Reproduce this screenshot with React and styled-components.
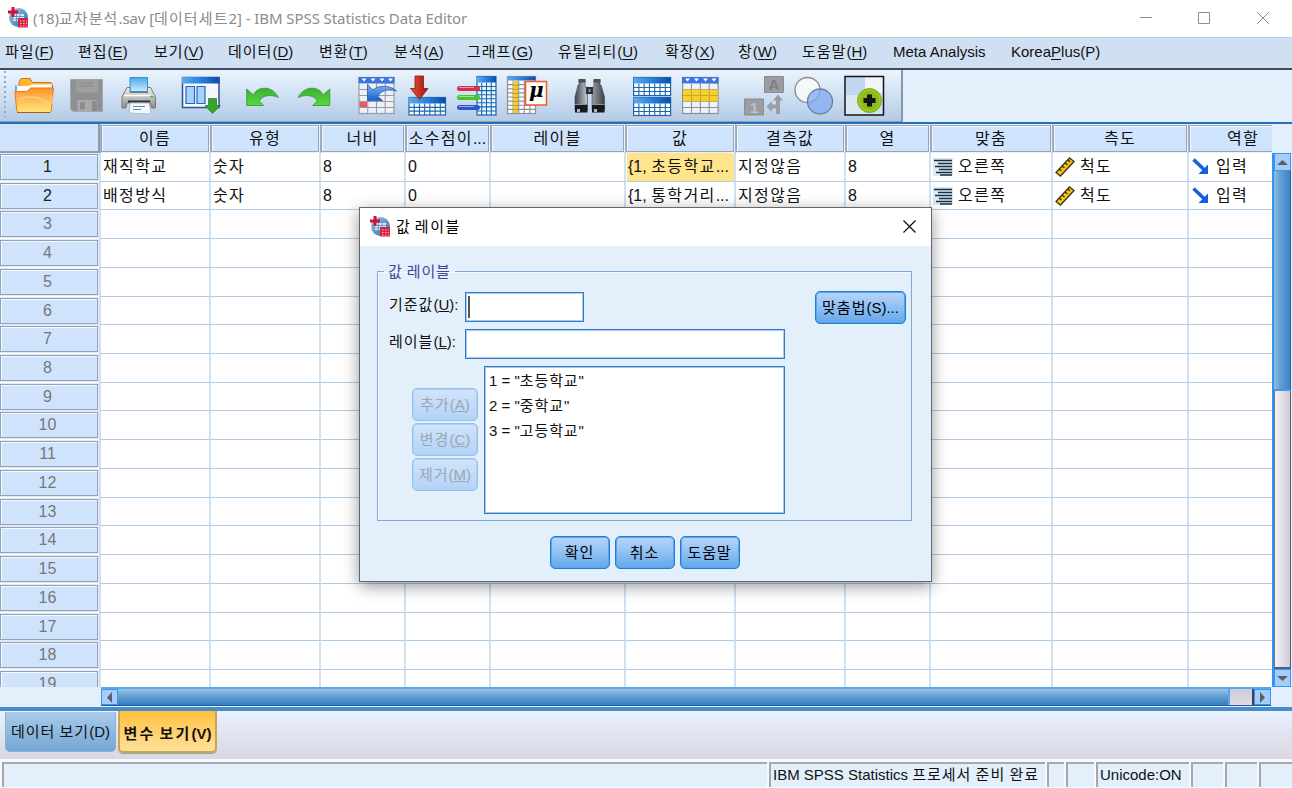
import React from 'react';
import styled, { createGlobalStyle, css } from 'styled-components';

const GlobalStyle = createGlobalStyle`
  * {
    box-sizing: border-box;
  }

  body {
    margin: 0;
    overflow: hidden;
    background: #fff;
    font-family: 'Liberation Sans', 'Noto Sans CJK KR', sans-serif;
    font-size: 15px;
    color: #111;
  }
`;

const Hangul = styled.span`
  letter-spacing: ${p => p.$space}px;
`;

// "_x" in a label marks the mnemonic letter
function Label({ text, space = 1 }) {
  return text
    .split(/([가-힣]+|_.)/)
    .filter(Boolean)
    .map((part, i) => {
      if (part[0] === '_') return <u key={i}>{part[1]}</u>;
      if (/[가-힣]/.test(part)) {
        return (
          <Hangul key={i} $space={space}>
            {part}
          </Hangul>
        );
      }
      return <React.Fragment key={i}>{part}</React.Fragment>;
    });
}

/* window */

const Window = styled.div`
  position: relative;
  width: 1292px;
  height: 788px;
  display: flex;
  flex-direction: column;
  overflow: hidden;
  white-space: pre;
  background: #e3effb;
`;

const TitleBar = styled.div`
  flex: none;
  height: 37px;
  display: flex;
  align-items: center;
  padding: 0 22px 2px 8px;
  background: #fff;
`;

const Title = styled.div`
  flex: 1;
  margin-left: 5px;
  line-height: 24px;
  font-family: 'Noto Sans', 'Noto Sans CJK KR', sans-serif;
  font-size: 15px;
  letter-spacing: -0.08px;
  color: #8c8c8c;
`;

const Controls = styled.svg`
  display: block;
  width: 132px;
  height: 14px;
  margin-top: 1px;
`;

const MenuBar = styled.div`
  flex: none;
  height: 33px;
  display: flex;
  align-items: center;
  padding: 0 0 2px 5px;
  line-height: 24px;
  background: #cfe0f2;
  border-top: 1px solid #b9cfe4;
  border-bottom: 2px solid #434a56;

  u {
    text-underline-offset: 2px;
  }
`;

const MenuItem = styled.div`
  width: ${p => p.$width}px;
`;

const ToolArea = styled.div`
  flex: none;
  height: 54px;
  display: flex;
  background: #e3effb;
  border-bottom: 2px solid #2371bd;
`;

const ToolBar = styled.div`
  width: 903px;
  display: flex;
  padding: 5px 0 0 4px;
  background: linear-gradient(#ecf4fd, #cfe0f3 50%, #b3cbe6);
  border-right: 2px solid #8b97a5;
  border-bottom: 1px solid #8d9aa9;
`;

const Grip = styled.div`
  width: 2px;
  height: 46px;
  margin-right: 8px;
  margin-top: -4px;
  background: repeating-linear-gradient(#9aa6b5 0 2px, transparent 2px 5px);
`;

const ToolIcon = styled.svg`
  flex: none;
  display: block;
  height: 42px;
  width: ${p => p.$width}px;
  margin-left: ${p => p.$gap}px;
`;

/* grid */

const GridArea = styled.div`
  flex: none;
  height: 587px;
  display: grid;
  grid-template-columns: 1272px 20px;
  grid-template-rows: 29px 534px 20px;
  border-bottom: 4px solid #4a8cca;
  background: #e3effb;
`;

const HeaderRow = styled.div`
  display: flex;
  overflow: hidden;
  background: #e9f2fc;
`;

const Corner = styled.div`
  flex: none;
  width: 100px;
  background: #cfe3fc;
  border-right: 2px solid #8f9db0;
  border-bottom: 2px solid #8f9db0;
`;

const HeaderCell = styled.div`
  flex: none;
  width: ${p => p.$width}px;
  padding: 1px 1px 0 1px;
  background: linear-gradient(90deg, #a5b1c2 1px, transparent 1px);
`;

const HeaderFace = styled.div`
  height: 27px;
  line-height: 25px;
  text-align: center;
  font-size: 16px;
  overflow: hidden;
  background: #cfe3fc;
  border: 1px solid #98a5b8;
  box-shadow: inset 1px 1px #f4f9ff;
`;

const Rows = styled.div`
  overflow: hidden;
  background: #fff;
`;

const Row = styled.div`
  display: flex;
  height: 28.72px;
`;

const RowHead = styled.div`
  flex: none;
  width: 98px;
  height: 26px;
  margin: 1px 1px 0 0;
  line-height: 24px;
  padding-right: 3px;
  text-align: center;
  font-size: 16px;
  color: ${p => (p.$used ? '#222' : '#777')};
  background: #cfe3fc;
  border: 1px solid #95a2b5;
  box-shadow: inset 1px 1px #f4f9ff;
  outline: 1px solid #dfeaf6;
`;

const Cell = styled.div`
  flex: none;
  width: ${p => p.$width}px;
  display: flex;
  align-items: center;
  padding: 0 0 0 2px;
  line-height: 24px;
  overflow: hidden;
  font-size: 16px;
  border-right: 2px solid #d0e1f1;
  border-bottom: 1px solid #aecbe7;

  &:nth-child(2) {
    width: ${p => p.$width + 2}px;
    border-left: 2px solid #d0e1f1;
  }

  ${p =>
    p.$active &&
    css`
      background: #ffe48b;
      border-left: 1px solid #fff;
      padding-left: 1px;
    `}
`;

const CellIcon = styled.svg`
  flex: none;
  display: block;
  width: 20px;
  height: 20px;
  margin-right: 5px;
`;

const VScroll = styled.div`
  width: 19px;
  display: flex;
  flex-direction: column;
  border-left: 2px solid #3494ee;
  background: #e7e6f0;
`;

const HScroll = styled.div`
  display: flex;
  height: 19px;
  margin-left: 101px;
  margin-right: 1px;
  border-top: 2px solid #57a9ee;
  border-bottom: 1px solid #1c5d9e;
  background: #d6d3e0;
`;

const ScrollButton = styled.div`
  flex: none;
  width: 17px;
  height: ${p => (p.$vertical ? 18 : 16)}px;
  display: flex;
  align-items: center;
  justify-content: center;
  background: #a5cdfc;
  border: 1px solid #3d95ea;
`;

const VThumb = styled.div`
  height: 220px;
  background: linear-gradient(90deg, #8dbbe0, #61a0d6 40%, #3a83c7);
  border-right: 1px solid #1c66ad;
  border-bottom: 2px solid #479ae6;
`;

const VTrack = styled.div`
  flex: 1;
  background: linear-gradient(90deg, #f3f2f8, #cfccd9);
  border-left: 1px solid #777;
  border-right: 1px solid #555a75;
  border-bottom: 2px solid #52617c;
`;

const HThumb = styled.div`
  width: 1110px;
  background: linear-gradient(#9cc3e4, #5e9dd3 50%, #347dc2);
`;

const HTrack = styled.div`
  flex: 1;
  background: linear-gradient(#cfcbd8, #dedbe6);
  border-left: 2px solid #57a9ee;
  border-right: 2px solid #3b4260;
`;

/* bottom */

const TabBar = styled.div`
  flex: none;
  height: 48px;
  display: flex;
  align-items: flex-start;
  gap: 2px;
  padding-left: 5px;
  background: linear-gradient(#e8f2fd, #d9d6e3);
`;

const Tab = styled.div`
  width: 111px;
  height: 40px;
  margin-top: 1px;
  line-height: 40px;
  text-align: center;
  background: linear-gradient(#a9cbe9, #74a7d6);
  border: 1px solid #86b2dc;
  border-top: 0;
  border-radius: 0 0 5px 5px;

  ${p =>
    p.$active &&
    css`
      width: 99px;
      height: 42px;
      margin-top: 0;
      line-height: 45px;
      font-weight: bold;
      background: linear-gradient(#ffc140, #ffe09a);
      border: 2px solid #c9a550;
      border-top: 0;
      box-shadow: 0 1px #8aa6c0;
    `}
`;

const StatusBar = styled.div`
  flex: none;
  height: 30px;
  display: flex;
  gap: 2px;
  padding: 3px 0 2px 2px;
  background: #f6faff;
`;

const StatusCell = styled.div`
  flex: none;
  width: ${p => p.$width}px;
  padding-left: 2px;
  line-height: 21px;
  background: #e3effb;
  border-top: 2px solid #a9a9ad;
  border-left: 2px solid #a4a7ad;
`;

/* dialog */

const Dialog = styled.div`
  position: absolute;
  left: 359px;
  top: 207px;
  width: 573px;
  height: 375px;
  background: #e3effb;
  border: 1px solid #64686e;
  box-shadow: 0 4px 15px rgba(0, 0, 0, 0.42);
`;

const DialogTitle = styled.div`
  height: 38px;
  display: flex;
  align-items: center;
  padding: 0 15px 2px 10px;
  background: #fff;
  color: #000;
`;

const DialogName = styled.div`
  flex: 1;
  margin-left: 6px;
  line-height: 22px;
  font-family: 'Noto Sans CJK KR', sans-serif;
`;

const Group = styled.fieldset`
  margin: 15px 19px 0 17px;
  height: 260px;
  padding: 10px 5px 0 11px;
  border: 1px solid #7ba9d9;
  box-shadow: inset 1px 1px #f4f9ff;
`;

const Legend = styled.legend`
  height: 20px;
  line-height: 21px;
  margin-left: -5px;
  padding: 0 4px;
  color: #42469b;
`;

const Field = styled.div`
  display: flex;
  height: 37px;
  align-items: flex-start;
`;

const FieldLabel = styled.label`
  width: 76px;
  line-height: 27px;
`;

const Input = styled.div`
  width: ${p => p.$width}px;
  height: 30px;
  padding: 3px 2px;
  margin-top: 1px;
  background: #fff;
  border: 1px solid #2f7bc4;
  box-shadow: inset 0 0 0 1px #a9cbed;
`;

const Caret = styled.div`
  width: 2px;
  height: 22px;
  background: #555;
`;

const Button = styled.button`
  width: ${p => p.$width || 60}px;
  height: 33px;
  padding: 0 0 2px;
  margin-left: ${p => (p.$push ? 'auto' : 0)};
  font: inherit;
  color: #000;
  background: linear-gradient(#b7d5fa, #8fc0f4 50%, #62a7e8);
  border: 1px solid #1f7fd8;
  box-shadow: inset 0 0 0 1px #5ba4e6;
  border-radius: 5px;

  &:disabled {
    color: #9ca6b1;
    background: linear-gradient(#d1e4fb, #b2d3f6);
    border-color: #94c3f0;
    box-shadow: inset 0 0 0 1px #aed0f4;
  }
`;

const ListArea = styled.div`
  display: flex;
  gap: 6px;
  padding-left: 23px;
  margin-top: 1px;
`;

const Actions = styled.div`
  display: flex;
  flex-direction: column;
  gap: 2px;
  padding-top: 22px;
`;

const ValueList = styled.div`
  width: 301px;
  height: 148px;
  padding: 1px 4px;
  line-height: 25px;
  background: #fff;
  border: 1px solid #2f7bc4;
  box-shadow: inset 0 0 0 1px #a9cbed;
`;

const Footer = styled.div`
  display: flex;
  justify-content: center;
  gap: 5px;
  padding: 15px 2px 0 0;
`;

/* icons */

function AppIcon() {
  return (
    <svg width="20" height="21" viewBox="0 0 20 21">
      <defs>
        <linearGradient id="globe" x2="1" y2="1">
          <stop offset="0" stopColor="#a3cbe8" />
          <stop offset="1" stopColor="#2568a8" />
        </linearGradient>
      </defs>
      <circle cx="10.5" cy="10.5" r="9.5" fill="url(#globe)" />
      <path d="M5 7h11v7H5z" fill="#dcecf8" />
      <path d="M5 9.500h11M5 12h11M8.500 7v7M12 7v7" stroke="#5f9bd0" />
      <path d="M0 5h10M5 0v10" stroke="#d01238" strokeWidth="3" />
      <path d="M10 11h10v9.500H10z" fill="#d12343" />
      <path d="M12 14h1.500M15 14h1.500M18 14h1M12 16.500h1.500M15 16.500h1.500M18 16.500h1M12 19h1.500M15 19h1.500M18 19h1" stroke="#ffb9c6" strokeWidth="1.200" />
    </svg>
  );
}

function Table({ x, y, w, h, cols = 5, rows = 3, head = 7, fill = '#fff', line = '#1967b0' }) {
  const body = h - head;
  const lines = [];
  for (let i = 1; i < cols; i++) lines.push(`M${x + (w * i) / cols} ${y + head}v${body}`);
  for (let i = 1; i < rows; i++) lines.push(`M${x} ${y + head + (body * i) / rows}h${w}`);
  return (
    <g>
      <rect x={x} y={y} width={w} height={h} fill={fill} stroke={line} strokeWidth="1.2" />
      <path d={lines.join('')} stroke={line} strokeWidth="1.1" />
      <rect x={x} y={y} width={w} height={head} fill="url(#blue)" />
    </g>
  );
}

const Gradients = () => (
  <defs>
    <linearGradient id="blue" x2="1">
      <stop offset="0" stopColor="#5cabee" />
      <stop offset="0.5" stopColor="#2a80dc" />
      <stop offset="1" stopColor="#0b4ba8" />
    </linearGradient>
    <linearGradient id="orange" x2="0" y2="1">
      <stop offset="0" stopColor="#ff9526" />
      <stop offset="0.35" stopColor="#ffb04a" />
      <stop offset="1" stopColor="#ffe87a" />
    </linearGradient>
    <linearGradient id="paper" x2="0" y2="1">
      <stop offset="0" stopColor="#4aa9ec" />
      <stop offset="1" stopColor="#c9ebfd" />
    </linearGradient>
    <linearGradient id="metal" x2="0" y2="1">
      <stop offset="0" stopColor="#f2f2f2" />
      <stop offset="1" stopColor="#8b8b8b" />
    </linearGradient>
    <linearGradient id="tube" x2="1">
      <stop offset="0" stopColor="#3d4349" />
      <stop offset="0.4" stopColor="#bcc6cf" />
      <stop offset="1" stopColor="#3a4046" />
    </linearGradient>
    <linearGradient id="green" x2="0" y2="1">
      <stop offset="0" stopColor="#3fae34" />
      <stop offset="1" stopColor="#54da3c" />
    </linearGradient>
    <linearGradient id="red" x2="1">
      <stop offset="0" stopColor="#e2543c" />
      <stop offset="1" stopColor="#a80f0a" />
    </linearGradient>
    <linearGradient id="arrow" x2="0" y2="1">
      <stop offset="0" stopColor="#7db6f3" />
      <stop offset="1" stopColor="#145fd0" />
    </linearGradient>
  </defs>
);

const undoPath = 'M.7 14v16.5h17l-4.500-4.500c3-5 10-7.500 19.300-3.500c-4-7-9-9.300-14-9.300c-5 0-9.500 2.500-11 6.800z';

const tools = [
  {
    name: 'open',
    width: 40,
    gap: 0,
    art: (
      <>
        <Gradients />
        <path d="M5 14V7l2-3.500h9l2.500 4H37l1.500 2V17z" fill="#ffb62e" stroke="#c9781c" />
        <path d="M2 11h12l4-1.500h20V17H2z" fill="#fbfdff" />
        <path d="M2 10.500v6M38.500 11v6" stroke="#3f8fe0" strokeWidth="1.500" />
        <path d="M.8 16.500h12l4-3.500h22.500l-2 22.500q-.3 2-2 2H5q-2 0-2.200-2z" fill="url(#orange)" stroke="#ee7a14" />
        <path d="M4.500 24Q20 19 31 26T37 20" fill="none" stroke="#ffd896" strokeOpacity=".6" strokeWidth="2" />
        <path d="M3 37.500h33" stroke="#a85c14" />
      </>
    ),
  },
  {
    name: 'save',
    width: 34,
    gap: 16,
    art: (
      <>
        <path d="M.5 4.500h32v32H3l-2.500-2.500z" fill="#8f9092" stroke="#a5a6a8" />
        <path d="M6.500 4.500h21.500v13h-21.500z" fill="#9d9ea0" />
        <path d="M9 8h14M9 11h14" stroke="#868789" />
        <path d="M7.500 25h20v11.500h-20z" fill="#a8a9ab" />
        <path d="M10 27.500h5v7h-5zM22 26h5v10h-5z" fill="#8b8c8e" />
      </>
    ),
  },
  {
    name: 'print',
    width: 36,
    gap: 17,
    art: (
      <>
        <path d="M9 2.500h17.500v14H9z" fill="url(#paper)" stroke="#3f8ed0" />
        <path d="M6 12.500h3v5h17.500v-5h3l4 7.500q1 1 1 3v10h-4l-1-5H6l-1 5H1V23q0-2 1-3z" fill="url(#metal)" stroke="#777" />
        <path d="M3 20.500h30" stroke="#fff" strokeWidth="1.500" />
        <path d="M29 21.500h3.500" stroke="#3cc23c" strokeWidth="1.800" />
        <path d="M7 26.500h22" stroke="#2c3035" strokeWidth="2" />
        <path d="M9 28h19l2 9.500-2 1.500-20-1z" fill="#f3f7fb" stroke="#aebac6" />
        <path d="M12 31.500h12M12 34.500h8" stroke="#5f88b8" />
      </>
    ),
  },
  {
    name: 'recall',
    width: 40,
    gap: 24,
    art: (
      <>
        <rect x="1.5" y="2.500" width="36.500" height="30" fill="#f3f9ff" stroke="#2b518f" strokeWidth="1.500" />
        <path d="M1 2h37.500v6.500H1z" fill="url(#blue)" />
        <path d="M5 11.500h8.500v17H5zM16 11.500h8v17h-8z" fill="#a8d2fb" stroke="#2168be" strokeWidth="1.200" />
        <path d="M27.500 23.500h8v7h4L31.500 38.500 24 30.500h3.500z" fill="#36a52c" stroke="#1b7a1b" strokeWidth=".7" />
      </>
    ),
  },
  {
    name: 'undo',
    width: 34,
    gap: 25,
    art: <path d={undoPath} fill="url(#green)" stroke="#2c9a2a" strokeWidth=".8" />,
  },
  {
    name: 'redo',
    width: 34,
    gap: 17,
    art: (
      <g transform="matrix(-1 0 0 1 33.5 0)">
        <path d={undoPath} fill="url(#green)" stroke="#2c9a2a" strokeWidth=".8" />
      </g>
    ),
  },
  {
    name: 'goto-case',
    width: 40,
    gap: 27,
    art: (
      <>
        <Table x={1} y={2.5} w={35} h={36} cols={4} rows={5} head={6} fill="#eef0f7" line="#9a9aa6" />
        <path d="M.5 2h36v6H.5z" fill="#3f74dc" />
        <path d="M3.500 3.500h5L6 6.500zM12.500 3.500h5l-2.500 3zM21.500 3.500h5l-2.500 3zM30 3.500h5l-2.500 3z" fill="#fff" />
        <path d="M1.500 27h7.500v5H1.500z" fill="#f45565" />
        <path d="M9.500 9.500v16h15l-4.500-4c2-5 8-8 18.500-5.500-5-5.500-18-6.500-23.500-1z" fill="url(#arrow)" stroke="#2a4f9e" strokeWidth=".7" />
      </>
    ),
  },
  {
    name: 'goto-variable',
    width: 39,
    gap: 10,
    art: (
      <>
        <Table x={1} y={22.5} w={36.5} h={17.5} cols={7} rows={3} head={6} />
        <path d="M7 1h8.500v12.500H20L11.500 24.500 2.500 13.500H7z" fill="url(#red)" stroke="#8c1410" strokeWidth=".8" />
      </>
    ),
  },
  {
    name: 'variables',
    width: 42,
    gap: 9,
    art: (
      <>
        <Table x={21} y={1.5} w={19} h={38.5} cols={4} rows={8} head={6} fill="#ecf6fd" />
        <g strokeWidth="5" strokeLinecap="round">
          <path d="M3.500 13.500h18" stroke="#cf3350" />
          <path d="M3.500 22.500h18" stroke="#45c42d" />
          <path d="M3.500 32.500h18" stroke="#2b57cf" />
        </g>
        <path d="M3 12.500h15M3 21.500h15M3 31.500h15" stroke="#fff" strokeOpacity=".5" />
      </>
    ),
  },
  {
    name: 'descriptives',
    width: 42,
    gap: 8,
    art: (
      <>
        <Table x={1.5} y={1.5} w={28} h={37} cols={5} rows={8} head={4} line="#8c8f96" />
        <path d="M7 6h5v32H7z" fill="#f3cc35" />
        <path d="M7 10.300h5M7 14.500h5M7 18.500h5M7 22.500h5M7 26.500h5M7 30.500h5M7 34.500h5" stroke="#b89a30" />
        <path d="M19.500 6.500h21v23.500h-21z" fill="#fffdfa" stroke="#f0592a" strokeWidth="1.5" />
        <text x="23" y="22" fontFamily="DejaVu Serif" fontStyle="italic" fontWeight="bold" fontSize="20" fill="#000">
          μ
        </text>
      </>
    ),
  },
  {
    name: 'find',
    width: 34,
    gap: 25,
    art: (
      <>
        <path d="M6 5h6v5l2.500 6v19H2V22L5 10h1zM21 5h6v5h1l3.500 12v13H19V16l2-6z" fill="url(#tube)" stroke="#3f454b" strokeWidth=".6" />
        <path d="M13 12h7v7h-7z" fill="#2a2f35" />
        <path d="M15.500 14h2v3h-2z" fill="#8c969f" />
        <path d="M5.500 4h7v3.500h-7zM20.500 4h7v3.500h-7z" fill="#4a5056" />
        <path d="M2 29.500h12.500v8H2zM19 29.500h12.500v8H19z" fill="#17191c" />
        <path d="M2 29.500h12.500M19 29.500h12.500" stroke="#8c949b" />
        <path d="M4 34h3v3H4zM21 34h3v3h-3z" fill="#b4b9be" />
      </>
    ),
  },
  {
    name: 'split',
    width: 39,
    gap: 26,
    art: (
      <>
        <Table x={0.6} y={2.5} w={37} h={18} cols={7} rows={3} head={6} />
        <Table x={0.6} y={22.5} w={37} h={18} cols={7} rows={3} head={6} />
      </>
    ),
  },
  {
    name: 'select',
    width: 37,
    gap: 10,
    art: (
      <>
        <Table x={0.6} y={2.5} w={35.5} h={36} cols={4} rows={5} head={6} fill="#f2f3f8" line="#8f8f9c" />
        <path d="M0 2h36.500v6H0z" fill="#3f74dc" />
        <path d="M3 3.500h5L5.500 6.500zM12 3.500h5l-2.500 3zM21 3.500h5l-2.500 3zM29.500 3.500h5l-2.500 3z" fill="#fff" />
        <path d="M1 14.500h35v12H1z" fill="#f5cf2b" />
        <path d="M1 20.500h35M9.500 14.500v12M18.400 14.500v12M27.300 14.500v12" stroke="#c9a52a" />
      </>
    ),
  },
  {
    name: 'value-labels',
    width: 41,
    gap: 25,
    art: (
      <>
        <path d="M20.500 1.500h19v16h-19zM.5 24h19v16H.5z" fill="#9b9da0" stroke="#8b8d90" />
        <text x="24.5" y="15" fontFamily="Liberation Sans" fontWeight="bold" fontSize="15" fill="#7d8083">
          A
        </text>
        <text x="6" y="37.5" fontFamily="Liberation Sans" fontWeight="bold" fontSize="15" fill="#c0c2c5">
          1
        </text>
        <path d="M34 19.500l5 6h-3V39h-4v-5.500h-4v3.500l-5.500-5.500 5.500-5.500v3.500h4v-4h-3z" fill="#9a9da1" />
      </>
    ),
  },
  {
    name: 'use-sets',
    width: 42,
    gap: 8,
    art: (
      <>
        <circle cx="14.500" cy="15" r="12.500" fill="#f7f9fb" fillOpacity=".9" stroke="#85888d" strokeWidth="1.300" />
        <circle cx="27" cy="26.500" r="12.500" fill="#7fa9f0" fillOpacity=".75" stroke="#6d7f9d" strokeWidth="1.300" />
      </>
    ),
  },
  {
    name: 'custom',
    width: 41,
    gap: 9,
    art: (
      <>
        <path d="M1 1.500h39v39H1z" fill="#d3e1f0" />
        <path d="M1.500 2h20v18h-20z" fill="#c2d8ef" />
        <path d="M21 2h18.500v16H21z" fill="#f0f5fb" />
        <path d="M2 20h18v20H2z" fill="#dde8f4" />
        <path d="M1 1.500h38.500v38.500H1z" fill="none" stroke="#10161e" strokeWidth="1.5" />
        <circle cx="25.500" cy="25.500" r="12" fill="#9cc91c" stroke="#7ba51a" />
        <circle cx="25.500" cy="25.500" r="9.500" fill="#8dbb18" />
        <path d="M25.500 19.500v12M19.500 25.500h12" stroke="#151515" strokeWidth="5" />
      </>
    ),
  },
];

const AlignIcon = () => (
  <CellIcon viewBox="0 0 20 20">
    <path d="M0 1h20v18H0z" fill="#d7eaf6" />
    <path d="M1 3.500h18M5 6.500h14M2 9.500h17M6 12.500h13M3 15.500h16M7 18h12" stroke="#1e2e3c" strokeWidth="1.600" />
  </CellIcon>
);

const ScaleIcon = () => (
  <CellIcon viewBox="0 0 20 20">
    <path d="M1 15.500L14.500 1l4.500 3.500L5.500 19z" fill="#f7c521" stroke="#3d3310" strokeWidth="1.300" />
    <path d="M4 12l2.500 2M7 9l2.500 2M10 6l2.500 2M13 3l2 2" stroke="#3d3310" strokeWidth="1.400" />
  </CellIcon>
);

const InputIcon = () => (
  <CellIcon viewBox="0 0 20 20">
    <path d="M2.500 2.500L13 12.500" stroke="#1260e0" strokeWidth="3.500" />
    <path d="M17 7.500V17H7.500z" fill="#1260e0" />
  </CellIcon>
);

const Arrow = ({ d }) => (
  <svg width="11" height="11" viewBox="0 0 11 11">
    <path d={d} fill="#5b6068" />
  </svg>
);

/* data */

const menus = [
  ['파일(_F)', 73],
  ['편집(_E)', 76],
  ['보기(_V)', 74],
  ['데이터(_D)', 91],
  ['변환(_T)', 75],
  ['분석(_A)', 73],
  ['그래프(_G)', 91],
  ['유틸리티(_U)', 107],
  ['확장(_X)', 73],
  ['창(_W)', 64],
  ['도움말(_H)', 91],
  ['Meta Analysis', 118],
  ['Korea_Plus(P)', 110],
];

const columns = [
  ['이름', 110],
  ['유형', 110],
  ['너비', 85],
  ['소수점이...', 85],
  ['레이블', 135],
  ['값', 110],
  ['결측값', 110],
  ['열', 85],
  ['맞춤', 122],
  ['측도', 136],
  ['역할', 110],
];

const icons = { 8: AlignIcon, 9: ScaleIcon, 10: InputIcon };

const variables = [
  ['재직학교', '숫자', '8', '0', '', '{1, 초등학교...', '지정않음', '8', '오른쪽', '척도', '입력'],
  ['배정방식', '숫자', '8', '0', '', '{1, 통학거리...', '지정않음', '8', '오른쪽', '척도', '입력'],
];

const labels = ['1 = "초등학교"', '2 = "중학교"', '3 = "고등학교"'];

function VariableRow({ index }) {
  const data = variables[index];
  return (
    <Row>
      <RowHead $used={!!data}>{index + 1}</RowHead>
      {columns.map(([name, width], i) => {
        const Icon = data && icons[i];
        return (
          <Cell key={name} $width={width} $active={index === 0 && i === 5}>
            {Icon && <Icon />}
            {data && (
              <span>
                <Label text={data[i]} space={1.4} />
              </span>
            )}
          </Cell>
        );
      })}
    </Row>
  );
}

function ValueLabels() {
  return (
    <Dialog>
      <DialogTitle>
        <AppIcon />
        <DialogName>
          <Label text="값 레이블" space={1.6} />
        </DialogName>
        <svg width="13" height="13" viewBox="0 0 13 13">
          <path d="M.5 .5l12 12M12.500 .5l-12 12" stroke="#000" strokeWidth="1.1" />
        </svg>
      </DialogTitle>
      <Group>
        <Legend>
          <Label text="값 레이블" space={0.8} />
        </Legend>
        <Field>
          <FieldLabel>
            <Label text="기준값(_U):" />
          </FieldLabel>
          <Input $width={119}>
            <Caret />
          </Input>
          <Button $width={91} $push>
            <Label text="맞춤법(S)..." />
          </Button>
        </Field>
        <Field>
          <FieldLabel>
            <Label text="레이블(_L):" />
          </FieldLabel>
          <Input $width={320} />
        </Field>
        <ListArea>
          <Actions>
            {['추가(_A)', '변경(_C)', '제거(_M)'].map(text => (
              <Button key={text} $width={66} disabled>
                <Label text={text} />
              </Button>
            ))}
          </Actions>
          <ValueList>
            {labels.map(text => (
              <div key={text}>
                <Label text={text} space={0.9} />
              </div>
            ))}
          </ValueList>
        </ListArea>
      </Group>
      <Footer>
        {['확인', '취소', '도움말'].map(text => (
          <Button key={text}>
            <Label text={text} space={0.9} />
          </Button>
        ))}
      </Footer>
    </Dialog>
  );
}

export default function App() {
  return (
    <Window>
      <GlobalStyle />
      <TitleBar>
        <AppIcon />
        <Title>
          <Label text="(18)교차분석.sav [데이터세트2] - IBM SPSS Statistics Data Editor" space={1.1} />
        </Title>
        <Controls viewBox="0 0 132 14" fill="none" stroke="#8c8c8c">
          <path d="M2 6.500h12M60.500 1.500h11v11h-11zM119 1l12 12M131 1l-12 12" />
        </Controls>
      </TitleBar>
      <MenuBar>
        {menus.map(([text, width]) => (
          <MenuItem key={text} $width={width}>
            <Label text={text} />
          </MenuItem>
        ))}
      </MenuBar>
      <ToolArea>
        <ToolBar>
          <Grip />
          {tools.map(({ name, width, gap, art }) => (
            <ToolIcon key={name} $width={width} $gap={gap} viewBox={`0 0 ${width} 42`}>
              {art}
            </ToolIcon>
          ))}
        </ToolBar>
      </ToolArea>
      <GridArea>
        <HeaderRow>
          <Corner />
          {columns.map(([name, width]) => (
            <HeaderCell key={name} $width={width}>
              <HeaderFace>
                <Label text={name} space={1.3} />
              </HeaderFace>
            </HeaderCell>
          ))}
        </HeaderRow>
        <div />
        <Rows>
          {Array.from({ length: 19 }, (_, i) => (
            <VariableRow key={i} index={i} />
          ))}
        </Rows>
        <VScroll>
          <ScrollButton $vertical>
            <Arrow d="M0 8L5.500 3 11 8z" />
          </ScrollButton>
          <VThumb />
          <VTrack />
          <ScrollButton $vertical>
            <Arrow d="M0 3h11L5.500 8z" />
          </ScrollButton>
        </VScroll>
        <HScroll>
          <ScrollButton>
            <Arrow d="M8 0v11L3 5.500z" />
          </ScrollButton>
          <HThumb />
          <HTrack />
          <ScrollButton>
            <Arrow d="M3 0v11l5-5.500z" />
          </ScrollButton>
        </HScroll>
      </GridArea>
      <TabBar>
        <Tab>
          <Label text="데이터 보기(D)" />
        </Tab>
        <Tab $active>
          <Label text="변수 보기(V)" space={2.1} />
        </Tab>
      </TabBar>
      <StatusBar>
        <StatusCell $width={765} />
        <StatusCell $width={276}>
          <Label text="IBM SPSS Statistics 프로세서 준비 완료" />
        </StatusCell>
        <StatusCell $width={17} />
        <StatusCell $width={28} />
        <StatusCell $width={93}>Unicode:ON</StatusCell>
        <StatusCell $width={32} />
        <StatusCell $width={32} />
        <StatusCell $width={40} />
      </StatusBar>
      <ValueLabels />
    </Window>
  );
}
